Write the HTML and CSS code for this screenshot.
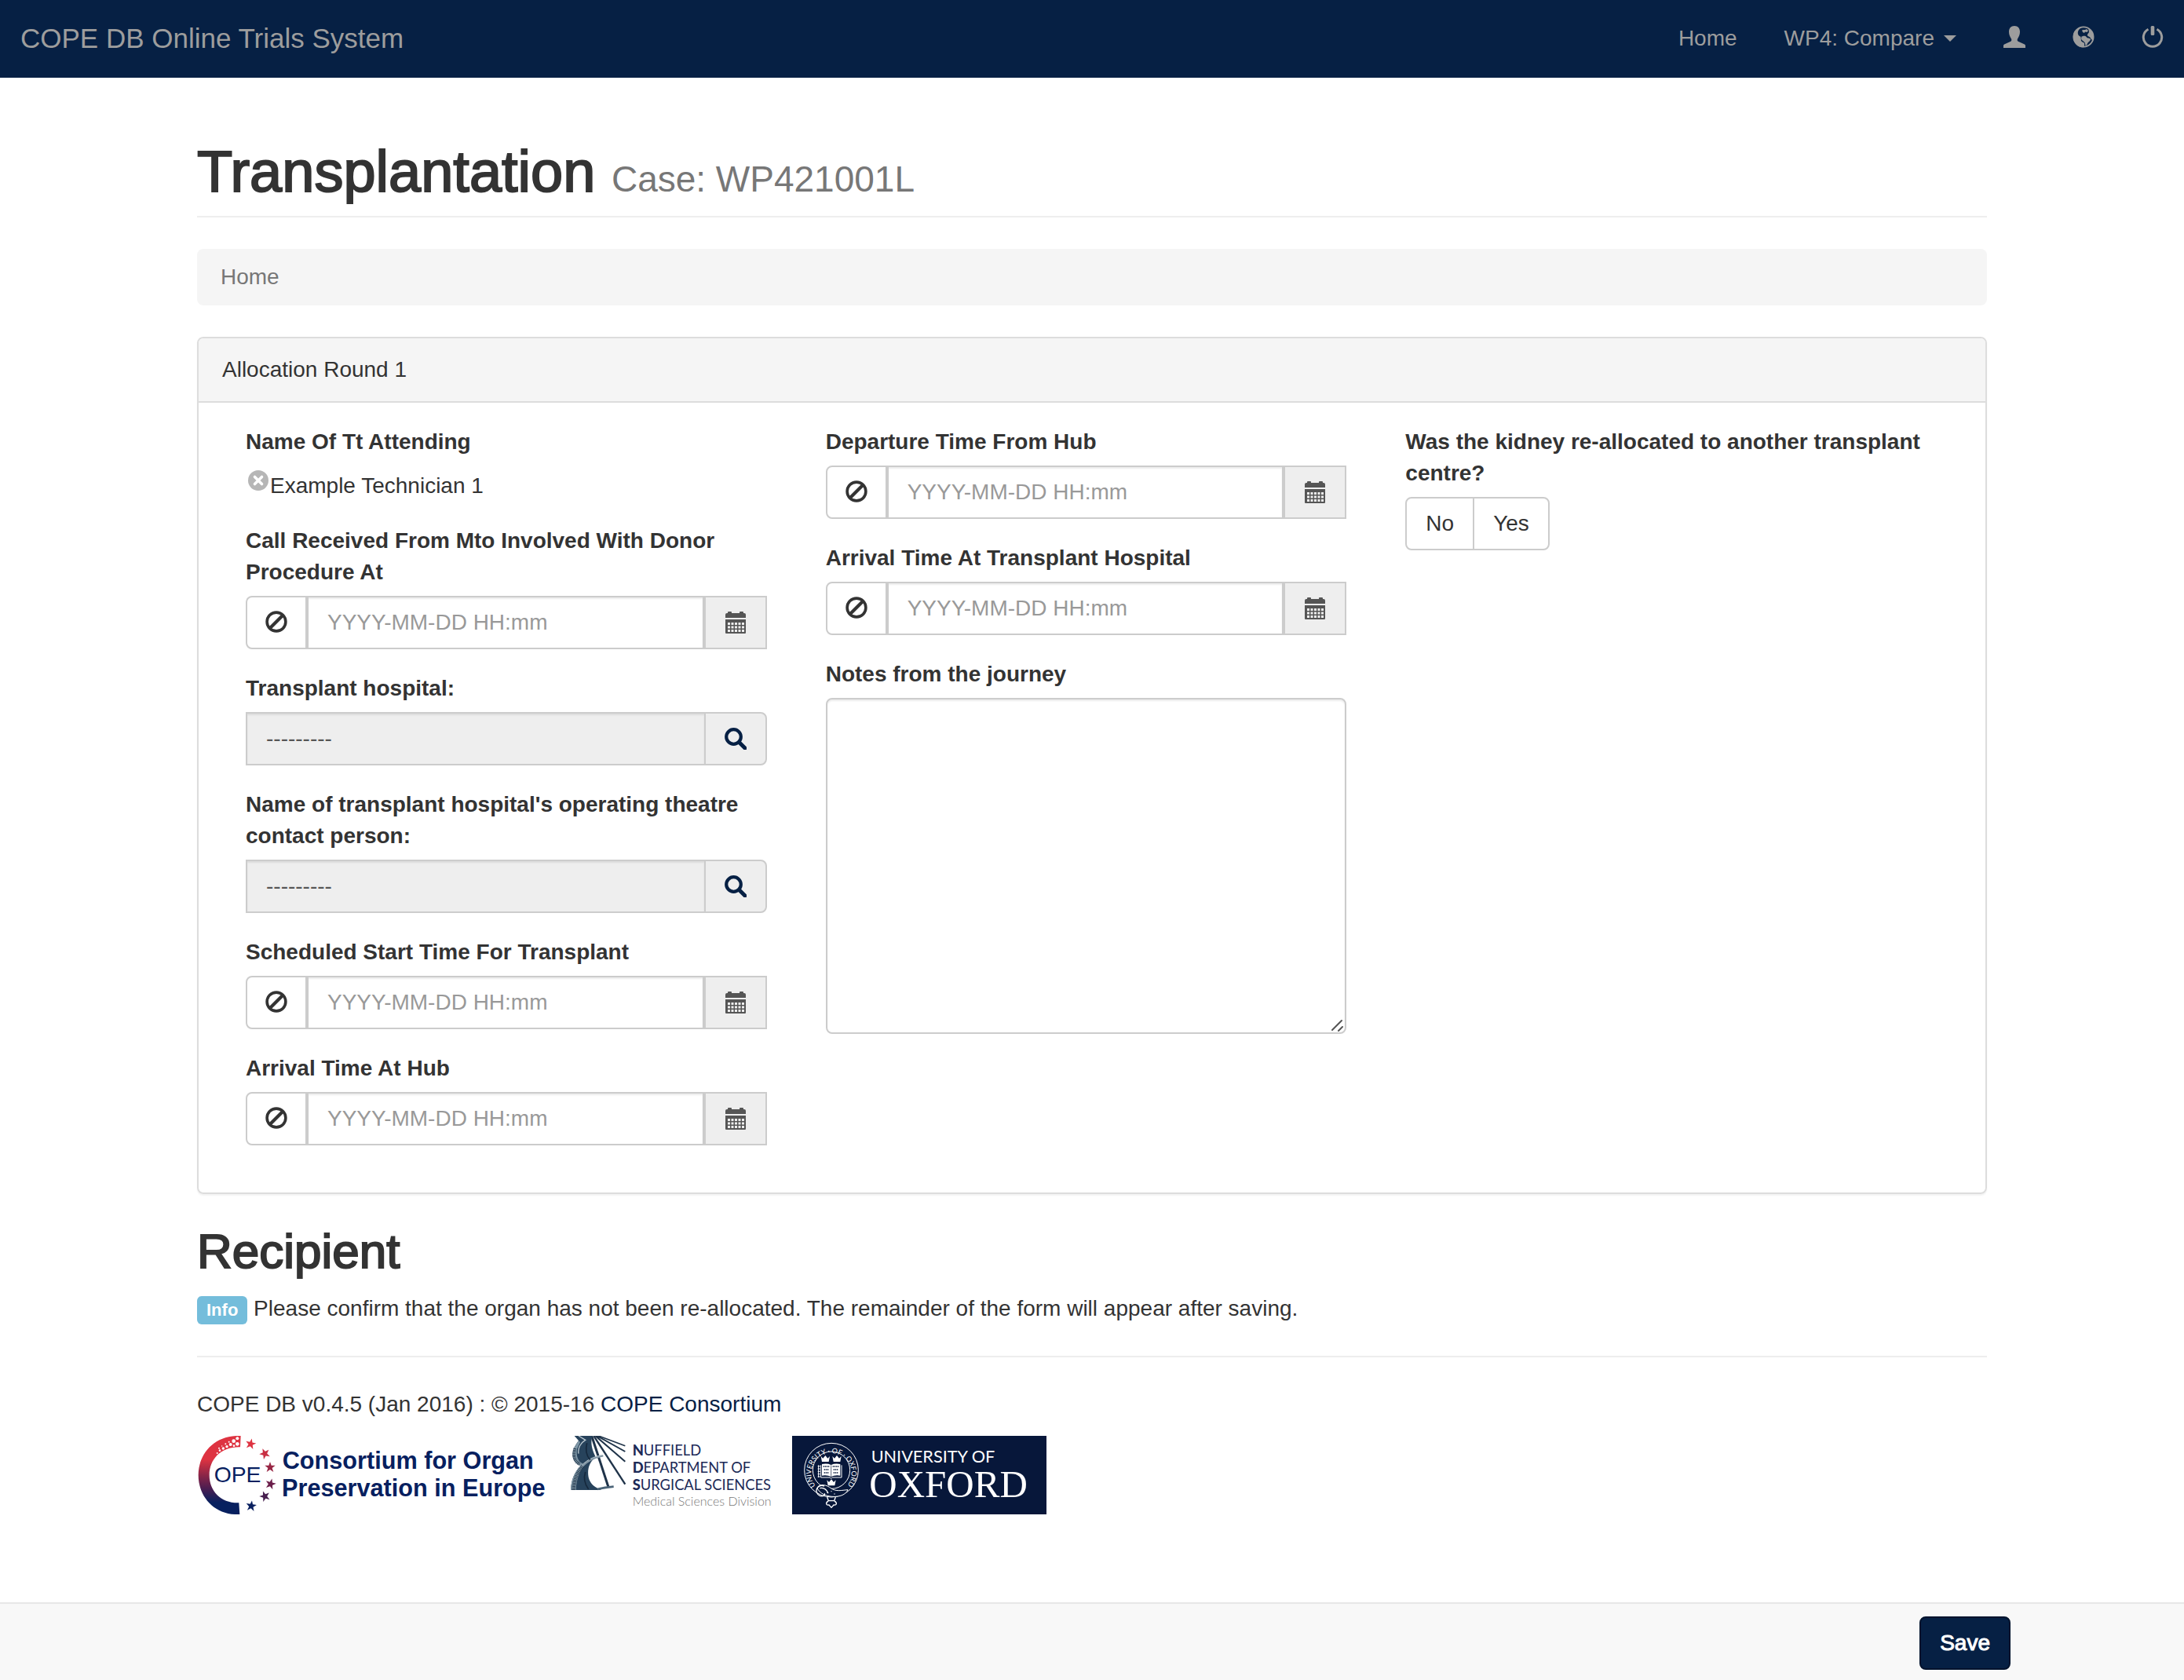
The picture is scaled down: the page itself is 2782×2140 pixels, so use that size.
FILE: index.html
```html
<!DOCTYPE html>
<html lang="en">
<head>
<meta charset="utf-8">
<title>Transplantation - COPE DB Online Trials System</title>
<meta name="viewport" content="width=device-width, initial-scale=1">
<link rel="stylesheet" href="styles.css">
</head>
<body>
<svg class="sprite" aria-hidden="true">
  <symbol id="i-ban" viewBox="0 0 28 28">
    <circle cx="14" cy="14" r="11.9" fill="none" stroke="currentColor" stroke-width="3.6"/>
    <path d="M6 22 22 6" stroke="currentColor" stroke-width="4.2"/>
  </symbol>
  <symbol id="i-calendar" viewBox="0 0 28 28">
    <path fill="currentColor" d="M1 8V4q0-2 2-2h1V1q0-1 1-1h3q1 0 1 1v1h10V1q0-1 1-1h3q1 0 1 1v1h1q2 0 2 2v4z"/>
    <path fill="currentColor" fill-rule="evenodd" d="M1 10h26v17q0 1-1 1H2q-1 0-1-1zM4 14v3h3v-3zm4.500 0v3h3v-3zm4.500 0v3h3v-3zm4.500 0v3h3v-3zm4.500 0v3h3v-3zM4 18.500v3h3v-3zm4.500 0v3h3v-3zm4.500 0v3h3v-3zm4.500 0v3h3v-3zm4.500 0v3h3v-3zM4 23v3h3v-3zm4.500 0v3h3v-3zm4.500 0v3h3v-3zm4.500 0v3h3v-3zm4.500 0v3h3v-3z"/>
  </symbol>
  <symbol id="i-search" viewBox="0 0 28 28">
    <circle cx="11.500" cy="11.500" r="9.300" fill="none" stroke="currentColor" stroke-width="4.200"/>
    <path d="M18.500 18.500 26 26" stroke="currentColor" stroke-width="5" stroke-linecap="round"/>
  </symbol>
</svg>

<header class="topbar">
  <a class="brand" href="#">COPE DB Online Trials System</a>
  <nav class="topnav">
    <a href="#">Home</a>
    <a href="#">WP4: Compare<span class="caret"></span></a>
    <a href="#" aria-label="Account">
      <svg class="icon" viewBox="0 0 28 28"><path fill="currentColor" d="M14 0c4.500 0 7 3 7 7.500 0 4-1.500 6.500-3 9-.600 1.200-.500 2.600.700 3.200L27 23.500q1 .500 1 1.500v3H0v-3q0-1 1-1.500l8.300-3.800c1.200-.600 1.300-2 .700-3.200-1.500-2.500-3-5-3-9C7 3 9.500 0 14 0z"/></svg>
    </a>
    <a href="#" aria-label="Sites">
      <svg class="icon" viewBox="0 0 28 28"><circle cx="14" cy="14" r="12.600" fill="none" stroke="currentColor" stroke-width="1.800"/><path fill="currentColor" d="M14 1C6 1 .800 7 .800 14c0 6 4 11.500 9.500 13 2.500.300 4.500.300 5-.500-1-1.500.500-3-.300-4.500-1-1-3-1.500-4-3-.700-1.700.500-3 .500-4.500-1.500-1-4-1.500-4.500-4-.500-2 0-4 1-5.500C9.500 3 11.500 2 14 1zM12 5.500c1-1 2.500-.500 4-.500l2-1 2 2-1.500 2-2.500-.500-1 1.500-2-1zM10.500 14.500c1.500-1.500 4-2 6-1.500 1 .500 1.500 2 3 2.500 1.500 0 3 .500 3.500 1.500 0 2-2.500 3-3.500 4.500-.500 1.500-1.500 3-3 4 0-2-.500-3-1-4.500-1.500-1.500-5-3.500-5-6zM20 3.500c3 1.500 6 4.500 7 8.500 0 3-.500 5-1.500 6.500l-2-2c-.500-2-2.500-3-4-3.500-1-1-.500-2.500.500-3.500 1.500-1 1-3.500 0-6z"/></svg>
    </a>
    <a href="#" aria-label="Log out">
      <svg class="icon" viewBox="0 0 28 28"><path d="M8.500 4.200a11.700 11.700 0 1 0 11 0" fill="none" stroke="currentColor" stroke-width="3"/><rect x="11.700" y="0" width="4.600" height="12" rx="1.500" fill="currentColor"/></svg>
    </a>
  </nav>
</header>

<main class="container">
  <div class="page-header">
    <h1>Transplantation <small>Case: WP421001L</small></h1>
  </div>
  <ol class="breadcrumb"><li>Home</li></ol>

  <form class="panel" id="transplant-form">
    <div class="panel-heading">Allocation Round 1</div>
    <div class="panel-body">
      <div class="column">
        <div class="form-group">
          <span class="label">Name Of Tt Attending</span>
          <div class="chosen">
            <button type="button" class="remove" aria-label="Remove technician"><svg viewBox="0 0 26 26"><circle cx="13" cy="13" r="13" fill="#b6b6b6"/><path d="M8.500 8.500l9 9m0-9l-9 9" stroke="#fff" stroke-width="3.600" stroke-linecap="round"/></svg></button>
            <span>Example Technician 1</span>
          </div>
        </div>
        <div class="form-group">
          <label class="label" for="call">Call Received From Mto Involved With Donor Procedure At</label>
          <div class="input-group">
            <button type="button" class="addon addon-left" aria-label="Not known"><svg class="icon"><use href="#i-ban"/></svg></button>
            <input class="control" id="call" type="text" placeholder="YYYY-MM-DD HH:mm">
            <button type="button" class="addon addon-date" aria-label="Pick date"><svg class="icon"><use href="#i-calendar"/></svg></button>
          </div>
        </div>
        <div class="form-group">
          <label class="label" for="hospital">Transplant hospital:</label>
          <div class="input-group">
            <select class="control" id="hospital" disabled><option>---------</option></select>
            <a class="addon addon-search" href="#" aria-label="Search hospitals"><svg class="icon"><use href="#i-search"/></svg></a>
          </div>
        </div>
        <div class="form-group">
          <label class="label" for="contact">Name of transplant hospital's operating theatre contact person:</label>
          <div class="input-group">
            <select class="control" id="contact" disabled><option>---------</option></select>
            <a class="addon addon-search" href="#" aria-label="Search contacts"><svg class="icon"><use href="#i-search"/></svg></a>
          </div>
        </div>
        <div class="form-group">
          <label class="label" for="start">Scheduled Start Time For Transplant</label>
          <div class="input-group">
            <button type="button" class="addon addon-left" aria-label="Not known"><svg class="icon"><use href="#i-ban"/></svg></button>
            <input class="control" id="start" type="text" placeholder="YYYY-MM-DD HH:mm">
            <button type="button" class="addon addon-date" aria-label="Pick date"><svg class="icon"><use href="#i-calendar"/></svg></button>
          </div>
        </div>
        <div class="form-group">
          <label class="label" for="hub-arrival">Arrival Time At Hub</label>
          <div class="input-group">
            <button type="button" class="addon addon-left" aria-label="Not known"><svg class="icon"><use href="#i-ban"/></svg></button>
            <input class="control" id="hub-arrival" type="text" placeholder="YYYY-MM-DD HH:mm">
            <button type="button" class="addon addon-date" aria-label="Pick date"><svg class="icon"><use href="#i-calendar"/></svg></button>
          </div>
        </div>
      </div>

      <div class="column">
        <div class="form-group">
          <label class="label" for="departure">Departure Time From Hub</label>
          <div class="input-group">
            <button type="button" class="addon addon-left" aria-label="Not known"><svg class="icon"><use href="#i-ban"/></svg></button>
            <input class="control" id="departure" type="text" placeholder="YYYY-MM-DD HH:mm">
            <button type="button" class="addon addon-date" aria-label="Pick date"><svg class="icon"><use href="#i-calendar"/></svg></button>
          </div>
        </div>
        <div class="form-group">
          <label class="label" for="arrival">Arrival Time At Transplant Hospital</label>
          <div class="input-group">
            <button type="button" class="addon addon-left" aria-label="Not known"><svg class="icon"><use href="#i-ban"/></svg></button>
            <input class="control" id="arrival" type="text" placeholder="YYYY-MM-DD HH:mm">
            <button type="button" class="addon addon-date" aria-label="Pick date"><svg class="icon"><use href="#i-calendar"/></svg></button>
          </div>
        </div>
        <div class="form-group">
          <label class="label" for="notes">Notes from the journey</label>
          <div class="notes">
            <textarea class="control" id="notes" rows="10"></textarea>
            <svg class="grip" viewBox="0 0 16 16" aria-hidden="true"><path d="M1 14 13 2M9 15l5-5" stroke="#555" stroke-width="2" stroke-linecap="round"/></svg>
          </div>
        </div>
      </div>

      <div class="column">
        <fieldset class="form-group">
          <legend class="label">Was the kidney re-allocated to another transplant centre?</legend>
          <div class="choices">
            <label><input type="radio" name="reallocated" value="no">No</label>
            <label><input type="radio" name="reallocated" value="yes">Yes</label>
          </div>
        </fieldset>
      </div>
    </div>
  </form>

  <h2>Recipient</h2>
  <p class="notice"><span class="badge">Info</span> Please confirm that the organ has not been re-allocated. The remainder of the form will appear after saving.</p>

  <footer class="footer">
    <p>COPE DB v0.4.5 (Jan 2016) : © 2015-16 <a href="#">COPE Consortium</a></p>
    <div class="logos">
      <svg width="452" height="100" viewBox="33 267 1356 300" role="img" aria-label="Consortium for Organ Preservation in Europe">
        <defs>
          <linearGradient id="arc" gradientUnits="userSpaceOnUse" x1="0" y1="267" x2="0" y2="567">
            <stop offset="0.300" stop-color="#de3341"/><stop offset="0.500" stop-color="#8c2547"/><stop offset="0.660" stop-color="#4f1d50"/><stop offset="0.850" stop-color="#07205f"/>
          </linearGradient>
          <path id="star" d="M0-21 5-7 20-7 8 3 13 18 0 9-13 18-8 3-20-7-5-7z"/>
        </defs>
        <path fill="url(#arc)" d="M200 267C100 262 38 335 38 417S100 572 196 567L193 523C125 525 80 478 80 417S125 308 198 310z"/>
        <g fill="#fff"><circle cx="187" cy="277" r="6"/><circle cx="173" cy="287" r="7"/><circle cx="187" cy="298" r="7"/><circle cx="161" cy="300" r="6"/><circle cx="174" cy="305" r="4"/><circle cx="155" cy="290" r="3"/><circle cx="147" cy="308" r="5"/><circle cx="142" cy="298" r="3"/><circle cx="133" cy="315" r="5"/><circle cx="128" cy="306" r="2"/><circle cx="120" cy="323" r="4"/><circle cx="117" cy="314" r="3"/><circle cx="110" cy="333" r="3"/></g>
        <use href="#star" transform="translate(238 298) rotate(12)" fill="#de3341"/>
        <use href="#star" transform="translate(292 335) rotate(-25)" fill="#c82f42"/>
        <use href="#star" transform="translate(312 387)" fill="#982644"/>
        <use href="#star" transform="translate(314 451) rotate(15)" fill="#6b1f4b"/>
        <use href="#star" transform="translate(292 498) rotate(-20)" fill="#47204f"/>
        <use href="#star" transform="translate(240 535) rotate(8)" fill="#0a205f"/>
        <g class="logo-sans" fill="#07205f">
          <text x="98" y="445" font-size="85">OPE</text>
          <text x="359" y="392" font-size="92" font-weight="700">Consortium for Organ</text>
          <text x="357" y="498" font-size="92" font-weight="700">Preservation in Europe</text>
        </g>
      </svg>
      <svg width="258" height="100" viewBox="22 12 774 300" role="img" aria-label="Nuffield Department of Surgical Sciences">
        <g fill="none" stroke="#1f3349">
          <path stroke-width="9" d="M102 12 166 208"/>
          <path stroke-width="7" d="M110 12 230 197"/>
          <path stroke-width="6" d="M116 12 230 110M122 12 230 72"/>
          <path stroke-width="5" d="M128 12 230 50"/>
        </g>
        <path fill="#27435c" d="M36 12H104C96 45 106 70 118 94 94 110 84 140 90 170 96 195 112 208 140 219H22C24 180 36 150 60 126 34 118 22 92 34 60 40 46 50 34 52 30z"/>
        <path fill="#7f97a6" d="M34 60C24 92 34 118 60 126L68 118C50 110 42 90 46 62L58 36 52 30zM22 219C24 180 36 150 60 126L84 112C60 140 44 170 42 219z"/>
        <g fill="none">
          <path stroke="#24384c" stroke-width="12" stroke-dasharray="3 3" d="M38 60C30 90 36 108 56 120"/>
          <path stroke="#24384c" stroke-width="14" stroke-dasharray="3 3" d="M33 219C34 180 48 150 70 126"/>
          <path stroke="#b9c6ce" stroke-width="4" d="M52 12 78 28C60 38 48 60 52 80"/>
          <path stroke="#8397a5" stroke-width="7" d="M66 128C90 106 110 94 146 88"/>
          <path stroke="#b9c6ce" stroke-width="3" d="M64 124C88 102 108 92 140 86"/>
          <path stroke="#4a6377" stroke-width="8" d="M124 216C145 210 165 208 186 206"/>
          <path stroke="#16293d" stroke-width="5" d="M84 40C76 70 84 90 96 104M78 150C70 175 78 200 90 216"/>
        </g>
        <g class="logo-lato" font-size="55" fill="#1c2a57">
          <text x="258" y="87"><tspan font-weight="900">N</tspan>UFFIELD</text>
          <text x="258" y="153"><tspan font-weight="900">D</tspan>EPARTMENT OF</text>
          <text x="258" y="219"><tspan font-weight="900">S</tspan>URGICAL SCIENCES</text>
          <text x="258" y="279" font-size="48" font-weight="300" fill="#777">Medical Sciences Division</text>
        </g>
      </svg>
      <svg width="324" height="100" viewBox="12 12 972 300" role="img" aria-label="University of Oxford">
        <defs><path id="ring" d="M102 203A77 77 0 1 1 222 203"/></defs>
        <rect x="12" y="12" width="972" height="300" fill="#07173a"/>
        <g fill="none" stroke="#fff" stroke-width="3">
          <circle cx="162" cy="143" r="103"/><circle cx="162" cy="143" r="71"/>
        </g>
        <text class="logo-lato" font-size="27" fill="#fff"><textPath href="#ring">UNIVERSITY · OF · OXFORD</textPath></text>
        <path fill="#fff" d="M122 90l8 8 9-11 9 11 8-8-4 21h-26zM166 90l8 8 9-11 9 11 8-8-4 21h-26zM145 181l8 8 9-11 9 11 8-8-4 21h-26z"/>
        <path fill="#fff" d="M126 120q20-4 35 3 15-7 35-3v44q-20-3-35 4-15-7-35-4z"/>
        <path fill="none" stroke="#fff" stroke-width="3" d="M122 124v47h34l5 4 5-4h35v-47M113 124v47M119 128h-9m9 10h-9m9 10h-9m9 10h-9m9 10h-9"/>
        <path stroke="#07173a" stroke-width="5" stroke-dasharray="4 2" d="M131 129h25M134 141h19M134 153h19M167 129h25M170 141h19M170 153h19"/>
        <path stroke="#07173a" stroke-width="2" d="M161 124v42"/>
        <path fill="#07173a" stroke="#fff" stroke-width="3" d="M108 212C120 192 145 200 160 212 180 226 200 220 225 218 218 236 195 246 165 244 140 242 118 232 108 212z"/>
        <path fill="none" stroke="#fff" stroke-width="4" d="M135 204C110 195 98 220 110 235 122 248 140 242 136 232M118 212C135 208 145 220 150 232M146 246l5 14c-14 10-8 18 2 16l9 10 9-10c10 2 16-6 2-16l5-14M151 260h22"/>
        <g fill="#fff"><circle cx="162" cy="224" r="2"/><circle cx="174" cy="234" r="2"/><circle cx="146" cy="228" r="2"/></g>
        <text class="logo-lato" x="314" y="114" font-size="65" fill="#fff">UNIVERSITY OF</text>
        <text class="logo-serif" x="307" y="246" font-size="147" fill="#fff">OXFORD</text>
      </svg>
    </div>
  </footer>
</main>

<div class="savebar">
  <div class="container"><button class="save" type="submit" form="transplant-form">Save</button></div>
</div>
</body>
</html>
```
FILE: styles.css
```css
*, *::before, *::after { box-sizing: border-box; }

body {
  margin: 0;
  min-height: 100vh;
  display: flex;
  flex-direction: column;
  background: #fff;
  color: #333;
  font: 28px/40px "Liberation Sans", Arial, sans-serif;
}

a { color: #062044; text-decoration: none; }
button, input, select, textarea { font: inherit; color: inherit; margin: 0; }
button { cursor: pointer; }
.sprite { display: none; }
.icon { display: block; width: 28px; height: 28px; flex: none; }

.container {
  width: 100%;
  max-width: 2340px;
  margin: 0 auto;
  padding: 0 30px;
}

/* top navigation */
.topbar {
  display: flex;
  justify-content: space-between;
  align-items: center;
  padding: 0 26px 2px;
  min-height: 99px;
  background: #062044;
}
.topbar a { color: #9d9d9d; }
.brand { font-size: 35px; }
.topnav { display: flex; align-items: center; gap: 60px; }
.topnav a { display: flex; align-items: center; }
.topnav .icon { margin-bottom: 3px; }
.caret {
  margin-left: 12px;
  border: 8px solid transparent;
  border-top-color: currentColor;
  border-bottom: 0;
}

/* page heading */
.page-header {
  margin: 80px 0 40px;
  padding-bottom: 16px;
  border-bottom: 2px solid #eee;
}
h1, h2 { margin: 0; font-weight: 400; -webkit-text-stroke: 2px currentColor; }
h1 { font-size: 74px; line-height: 80px; }
h1 small { font-size: 46px; line-height: 1; color: #777; -webkit-text-stroke: 0; }
h2 { font-size: 62px; line-height: 66px; margin-bottom: 20px; }

.breadcrumb {
  list-style: none;
  margin: 0 0 40px;
  padding: 16px 30px;
  background: #f5f5f5;
  border-radius: 8px;
  color: #777;
}

/* panel */
.panel {
  margin-bottom: 40px;
  border: 2px solid #ddd;
  border-radius: 8px;
  box-shadow: 0 2px 2px rgba(0, 0, 0, .05);
}
.panel-heading {
  padding: 20px 30px;
  background: #f5f5f5;
  border-bottom: 2px solid #ddd;
  border-radius: 6px 6px 0 0;
}
.panel-body {
  display: grid;
  grid-template-columns: repeat(3, minmax(0, 1fr));
  gap: 75px;
  padding: 30px 75px 30px 60px;
}

.form-group { margin: 0 0 30px; padding: 0; border: 0; min-width: 0; }
.label { display: block; padding: 0; margin-bottom: 10px; font-weight: 700; }
.chosen { display: flex; padding: 6px 0 0 3px; gap: 2px; }
.remove { width: 26px; height: 26px; padding: 0; border: 0; background: none; }
.remove svg { display: block; }

.input-group { display: flex; }
.control {
  display: block;
  flex: 1;
  width: 100%;
  min-width: 0;
  height: 68px;
  padding: 12px 24px;
  border: 2px solid #ccc;
  border-radius: 0;
  background: #fff;
  box-shadow: inset 0 2px 2px rgba(0, 0, 0, .075);
}
.control::placeholder { color: #999; opacity: 1; }
select.control {
  appearance: none;
  border-right: 0;
  background: #eee;
  color: #555;
  opacity: 1;
}
.addon {
  display: flex;
  flex: none;
  align-items: center;
  justify-content: center;
  width: 80px;
  height: 68px;
  padding: 0;
  border: 2px solid #ccc;
  background: #eee;
  color: #555;
}
.addon-left {
  width: 78px;
  padding-bottom: 2px;
  background: #fff;
  color: #333;
  border-radius: 8px 0 0 8px;
}
.addon-search { color: #062044; border-radius: 0 8px 8px 0; }

.notes { position: relative; }
textarea.control { height: 428px; border-radius: 8px; resize: none; }
.grip { position: absolute; right: 3px; bottom: 3px; width: 16px; height: 16px; }

.choices { display: inline-flex; border: 2px solid #ccc; border-radius: 8px; }
.choices label { padding: 12px 24px; cursor: pointer; }
.choices label + label { border-left: 2px solid #ccc; }
.choices input { position: absolute; opacity: 0; }

/* recipient */
.notice { margin: 0; padding-bottom: 40px; border-bottom: 2px solid #eee; }
.badge {
  display: inline-block;
  padding: 4px 12px;
  border-radius: 6px;
  background: #74bddb;
  color: #fff;
  font-size: 22px;
  font-weight: 700;
  line-height: 28px;
}

.footer { padding: 40px 0; }
.footer p { margin: 0 0 20px; }
.logos { display: flex; gap: 24px; }
.logos svg { flex: none; }
.logo-sans { font-family: "Liberation Sans", Arial, sans-serif; }
.logo-lato { font-family: Lato, sans-serif; }
.logo-serif { font-family: "Liberation Serif", "Times New Roman", serif; }

/* save bar */
.savebar {
  margin-top: auto;
  padding: 16px 0 13px;
  border-top: 2px solid #e7e7e7;
  background: #f8f8f8;
}
.savebar .container { display: flex; justify-content: flex-end; padding: 0; }
.save {
  padding: 12px 24px;
  border: 2px solid #00122c;
  border-radius: 8px;
  background: #062044;
  color: #fff;
  line-height: 40px;
  -webkit-text-stroke: 1px #fff;
}
```
